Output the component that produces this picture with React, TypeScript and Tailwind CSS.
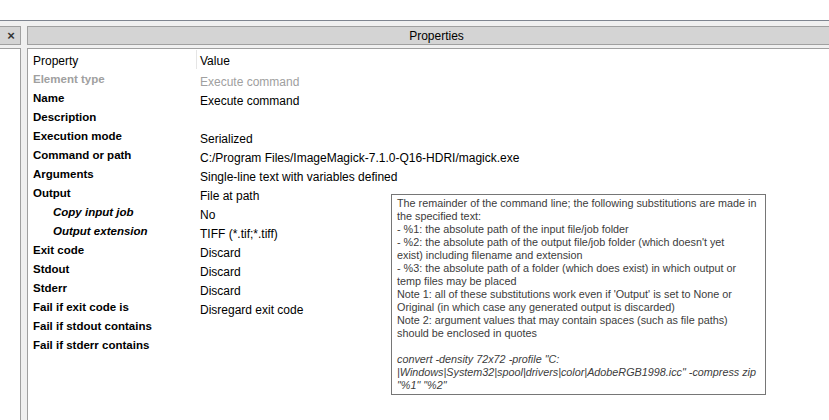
import React from 'react';

interface Row {
  label: string;
  value?: string;
  indent?: boolean;
  muted?: boolean;
}

const rows: Row[] = [
  { label: 'Element type', value: 'Execute command', muted: true },
  { label: 'Name', value: 'Execute command' },
  { label: 'Description' },
  { label: 'Execution mode', value: 'Serialized' },
  { label: 'Command or path', value: 'C:/Program Files/ImageMagick-7.1.0-Q16-HDRI/magick.exe' },
  { label: 'Arguments', value: 'Single-line text with variables defined' },
  { label: 'Output', value: 'File at path' },
  { label: 'Copy input job', value: 'No', indent: true },
  { label: 'Output extension', value: 'TIFF (*.tif;*.tiff)', indent: true },
  { label: 'Exit code', value: 'Discard' },
  { label: 'Stdout', value: 'Discard' },
  { label: 'Stderr', value: 'Discard' },
  { label: 'Fail if exit code is', value: 'Disregard exit code' },
  { label: 'Fail if stdout contains' },
  { label: 'Fail if stderr contains' },
];

const tipLines = [
  'The remainder of the command line; the following substitutions are made in',
  'the specified text:',
  '- %1: the absolute path of the input file/job folder',
  "- %2: the absolute path of the output file/job folder (which doesn't yet",
  'exist) including filename and extension',
  '- %3: the absolute path of a folder (which does exist) in which output or',
  'temp files may be placed',
  "Note 1: all of these substitutions work even if 'Output' is set to None or",
  'Original (in which case any generated output is discarded)',
  'Note 2: argument values that may contain spaces (such as file paths)',
  'should be enclosed in quotes',
];

const tipExample = [
  'convert -density 72x72 -profile "C:',
  '|Windows|System32|spool|drivers|color|AdobeRGB1998.icc" -compress zip',
  '"%1" "%2"',
];

function Tooltip(): JSX.Element {
  return (
    <div className="absolute left-[391px] top-[194px] h-[201px] w-[375px] border border-[#767676] bg-white pl-[5px] pt-[2px] font-['Liberation_Sans'] text-[10.8px] leading-[13px] text-[#3c3c3c]">
      {tipLines.map(line => (
        <div key={line} className="whitespace-nowrap">
          {line}
        </div>
      ))}
      <div className="h-[13px]" />
      {tipExample.map(line => (
        <div key={line} className="whitespace-nowrap italic">
          {line}
        </div>
      ))}
    </div>
  );
}

export default function App(): JSX.Element {
  return (
    <div className="relative h-[420px] w-[829px] overflow-hidden bg-white font-['Liberation_Sans'] text-black">
      <div className="h-[20px]" />
      <div className="flex h-[400px] gap-[6px] border-t border-[#7f8590] bg-[#f0f0f0] pt-[5px]">
        <div className="flex w-[21px] flex-col">
          <div className="flex h-[19px] items-center justify-center border-y border-r border-[#a0a0a0] bg-[#d4d4d4] pl-[2px] text-[13px] font-bold leading-none text-[#333]">
            ×
          </div>
          <div className="h-[3px]" />
          <div className="flex-1 border-t border-r border-[#a0a0a0] bg-white" />
        </div>

        <div className="flex flex-1 flex-col">
          <div className="flex h-[19px] items-center justify-center border-y border-l border-[#a0a0a0] bg-[#d4d4d4] pl-[16px] text-[12px] text-black">
            Properties
          </div>
          <div className="h-[3px]" />
          <div className="flex-1 border-t border-l border-[#a0a0a0] bg-white">
            <div className="flex h-[21px] text-[12px]">
              <div className="flex w-[168px] items-center pl-[5px] pt-[2px]">Property</div>
              <div className="my-[1px] w-px bg-[#e5e5e5]" />
              <div className="flex items-center pl-[3px] pt-[2px]">Value</div>
            </div>
            {rows.map(row => (
              <div key={row.label} className="flex h-[19px]">
                <div
                  className={`w-[169px] pt-[1px] text-[11.5px] font-bold ${
                    row.indent ? 'pl-[25px] italic' : 'pl-[5px]'
                  } ${row.muted ? 'text-[#a0a0a0]' : 'text-black'}`}
                >
                  {row.label}
                </div>
                <div
                  className={`pl-[3px] pt-[3px] text-[12px] ${
                    row.muted ? 'text-[#a0a0a0]' : 'text-black'
                  }`}
                >
                  {row.value}
                </div>
              </div>
            ))}
          </div>
        </div>
      </div>
      <Tooltip />
    </div>
  );
}
